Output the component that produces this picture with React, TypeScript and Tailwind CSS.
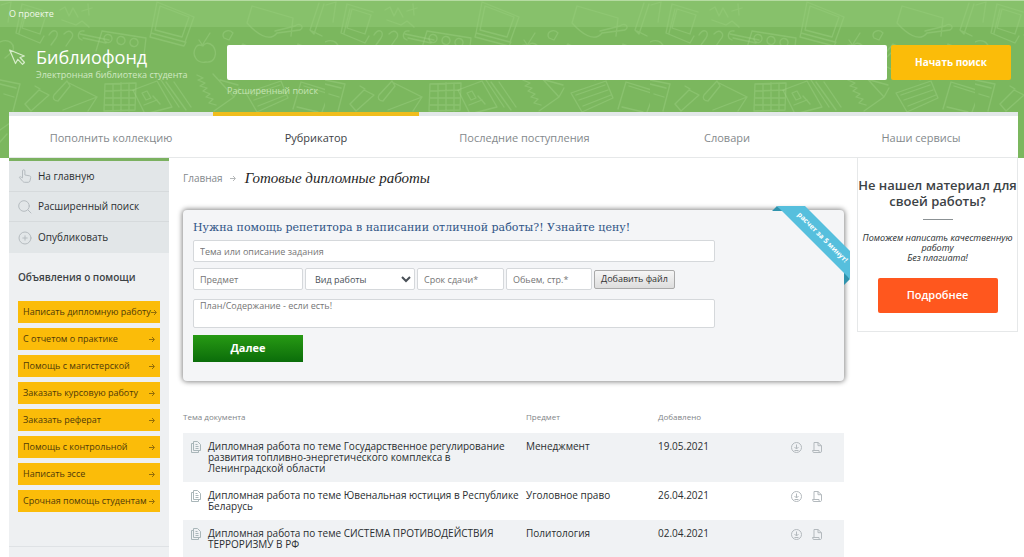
import React from 'react';

const navItems = ['Пополнить коллекцию', 'Рубрикатор', 'Последние поступления', 'Словари', 'Наши сервисы'];

const helpLinks = [
  'Написать дипломную работу',
  'С отчетом о практике',
  'Помощь с магистерской',
  'Заказать курсовую работу',
  'Заказать реферат',
  'Помощь с контрольной',
  'Написать эссе',
  'Срочная помощь студентам',
];

type DocumentRow = {
  title: string;
  subject: string;
  date: string;
};

const documents: DocumentRow[] = [
  {
    title: 'Дипломная работа по теме Государственное регулирование развития топливно-энергетического комплекса в Ленинградской области',
    subject: 'Менеджмент',
    date: '19.05.2021',
  },
  {
    title: 'Дипломная работа по теме Ювенальная юстиция в Республике Беларусь',
    subject: 'Уголовное право',
    date: '26.04.2021',
  },
  {
    title: 'Дипломная работа по теме СИСТЕМА ПРОТИВОДЕЙСТВИЯ ТЕРРОРИЗМУ В РФ',
    subject: 'Политология',
    date: '02.04.2021',
  },
];

// School doodles repeated behind the header
const HeaderPattern: React.FC = () => (
  <svg className="absolute inset-0 h-full w-full" aria-hidden="true">
    <defs>
      <pattern id="doodles" width="325" height="160" patternUnits="userSpaceOnUse">
        <g fill="none" stroke="#a5d58b" strokeWidth="1.300" strokeOpacity="0.36" strokeLinejoin="round" strokeLinecap="round">
          <path d="M22 4 16 33l24 10 4-7M22 4l26 8M19 33l6-24M27 9l19 6-6 19-18-6z" />
          <path d="m60 10 5-3 4 9 4-8 5 9M82 11l10-3M88 4l1 11M62 20l14 5 6-4 7 6" />
          <path d="m157 2 37 15-9 25-34-9zM160 6l29 11-7 20-27-7zM151 33l-1 4 34 9 2-4" />
          <path d="m102 31 44 7-2 17M102 31l-6 20M104 38a4 4 0 1 0 8 1 4 4 0 1 0-8-1M117 40a4 4 0 1 0 8 1 4 4 0 1 0-8-1M130 42a4 4 0 1 0 8 1 4 4 0 1 0-8-1" />
          <path d="M196 47c-5 8 1 17 10 15 9 1 12-9 7-16-5-5-9-2-10 0-2-1-5-2-7 1zM203 46l-4-6M203 44l7-11" />
          <path d="M49 35c5-8 11-3 7 3l-5 7M64 34c6-6 12 0 6 6l-4 6M80 34l29 6M83 38l23 5M84 31c-6-1-8 7-2 9" />
          <path d="m0 80 20 4-7 27M0 84l16 4M4 94l10 3M25 104l14-14 10 5-18 16zM35 86l5 3" />
          <path d="M54 95 67 81l3 5-12 15c-4 0-6-3-4-6zM69 83l28 14-9 14M97 97l-34 13" />
          <path d="m105 84 31-1-1 27-31 1zM105 91l31-1M105 98h30M105 105h30M113 84v27M121 83v28M129 83v28" />
          <path d="m133 90 24-9 15 26-27 7zM142 93l5-2 4 7-5 2zM153 96l7 8M144 105l13-5M161 80l18 27M166 82l20 28M174 82l17 25" />
          <path d="m197 75 6 3-5 2 7 3-5 3 7 2-4 3 7 3-4 3 7 2-4 4 7 2M213 74l21 23-20 14M234 97l5-9M220 80l18 5" />
          <path d="m228 62 15-18 17 8-10 22zM232 62l13-13M224 38c-4-6 5-10 9-5l-4 7z" />
          <path d="m246 93 35-12 7 17-31 14zM251 95l29-10M254 100l29-10M258 106l28-11" />
          <path d="m252 6 41 12-2 18M252 6l-5 17c9 10 22 20 30 10l23-3c5-3 0-8-5-4l-20 5" />
          <path d="m301 82 29 9-8 21M301 82l-8 27M304 86l22 7M297 107l21 5M319 3l-9 27 4 4 10-30M312 31l10 5" />
          <path d="M0 42c9-4 15 2 13 9L5 58M0 130l10-7M318 130l7-8M1 5l10-3-3 20M0 142l7-8" />
          <path d="M262 62l21-8 10 17-23 9zM298 44l16 6-5 15-16-5z" />
        </g>
      </pattern>
    </defs>
    <rect width="100%" height="100%" fill="url(#doodles)" />
  </svg>
);

const CursorIcon: React.FC = () => (
  <svg className="mt-1 h-4 w-4 shrink-0" viewBox="0 0 16 16" fill="none" stroke="#d6ecc9" strokeWidth="1.200" strokeLinejoin="round" aria-hidden="true">
    <path d="m.7 1 14.600 6-4.300 1.500 4.500 5-2 1.800-4.700-5L6.500 14.500z" />
  </svg>
);

const HandIcon: React.FC = () => (
  <svg className="h-[14px] w-[14px] shrink-0" viewBox="0 0 14 14" fill="none" stroke="#b6bcc0" strokeWidth="1" strokeLinejoin="round" strokeLinecap="round" aria-hidden="true">
    <path d="M4.500 8.500V2a1.200 1.200 0 0 1 2.400 0v4l4.600.8c1 .2 1.300.8 1.200 1.700l-.7 3.300c-.2 1-.8 1.500-1.700 1.500H6.500c-.7 0-1.200-.3-1.600-.8L1.300 8.400c.6-.9 1.600-.8 2.200-.1z" />
  </svg>
);

const SearchIcon: React.FC = () => (
  <svg className="h-[14px] w-[14px] shrink-0" viewBox="0 0 14 14" fill="none" stroke="#b6bcc0" strokeLinecap="round" aria-hidden="true">
    <circle cx="6" cy="6" r="5.300" />
    <path d="m10 10 3 3" />
  </svg>
);

const PlusIcon: React.FC = () => (
  <svg className="h-[14px] w-[14px] shrink-0" viewBox="0 0 14 14" fill="none" stroke="#b6bcc0" strokeLinecap="round" aria-hidden="true">
    <circle cx="7" cy="7" r="6" />
    <path d="M7 4.800v4.400M4.800 7h4.400" />
  </svg>
);

const ArrowIcon: React.FC = () => (
  <svg className="h-[7px] w-[6px] shrink-0 opacity-60" viewBox="0 0 6 7" fill="none" stroke="currentColor" strokeWidth="1" aria-hidden="true">
    <path d="M0 3.500h5M3 1l2.500 2.500L3 6" />
  </svg>
);

const CopyIcon: React.FC = () => (
  <svg className="h-3 w-[10px]" viewBox="0 0 10 12" fill="none" stroke="#a9b6b9" strokeWidth="1" aria-hidden="true">
    <path d="M2.500.5h4l3 3v6h-7zM2.500 2.500h-2v9h7v-2M4.500 3.500h2M4.500 5.500h3M4.500 7.500h3" />
  </svg>
);

const DownloadIcon: React.FC = () => (
  <svg className="h-[11px] w-[11px]" viewBox="0 0 11 11" fill="none" stroke="#b3b9bd" strokeWidth="1" aria-hidden="true">
    <circle cx="5.500" cy="5.500" r="5" />
    <path d="M5.500 2.500v4.500M3.500 5l2 2 2-2M3.500 8.500h4" />
  </svg>
);

const PageIcon: React.FC = () => (
  <svg className="h-[11px] w-[10px]" viewBox="0 0 10 11" fill="none" stroke="#b3b9bd" strokeWidth="1" strokeLinejoin="round" aria-hidden="true">
    <path d="M2 8V.5h4l3.500 3.200V9c0 1-.4 1.500-1.200 1.500h-7L.5 8.500H7c0 1.200.4 2 1.300 2M6 .5v3.200h3.500" />
  </svg>
);

const Ribbon: React.FC = () => (
  <div className="absolute -right-[7px] -top-[5px] h-[81px] w-[80px]">
    <svg className="h-full w-full" viewBox="0 0 80 81">
      <path d="M1 6 6 1l6 5zM73 66l6 8-6 6z" fill="#2f93ad" />
      <path d="M6 1h28l45 45v28z" fill="#56bfdd" />
      <text
        x="50"
        y="34"
        transform="rotate(45 50 34)"
        textAnchor="middle"
        fill="#fff"
        className="font-['Open_Sans',sans-serif] text-[7px] font-bold"
      >
        расчет за 5 минут!
      </text>
    </svg>
  </div>
);

const Header: React.FC = () => (
  <header className="relative bg-[#7bb75e]">
    <HeaderPattern />
    <div className="relative flex h-[27px] items-center border-t border-[#b5dba2] bg-[#93cc78]/50 px-[9px] text-[9px] text-[#f0f8ea]">
      <a href="#about">О проекте</a>
    </div>
    <div className="relative flex h-[85px] pl-[9px] pr-[13px] pt-[18px]">
      <a href="#home" className="flex w-[218px] shrink-0 gap-[11px]">
        <CursorIcon />
        <span className="flex flex-col text-white">
          <span className="text-[18px] leading-6">Библиофонд</span>
          <span className="text-[9px] leading-3 text-[#cfe8c1]">Электронная библиотека студента</span>
        </span>
      </a>
      <form className="flex-1">
        <div className="flex gap-1">
          <input type="search" aria-label="Поиск" className="h-[35px] min-w-0 flex-1 rounded-[2px] bg-white px-3 text-xs outline-none" />
          <button type="button" className="h-[35px] w-[120px] rounded-[2px] bg-[#fbbc09] text-[10px] font-bold text-white">
            Начать поиск
          </button>
        </div>
        <a href="#advanced" className="mt-[5px] block text-[9px] leading-3 text-[#c4e3b3]">
          Расширенный поиск
        </a>
      </form>
    </div>
    <nav className="relative ml-[9px] mr-[6px] grid grid-cols-[204fr_206fr_211fr_194fr_194fr] border-b border-[#e6e8e9] bg-white text-center text-[11px]">
      {navItems.map((item) => (
        <a
          key={item}
          href="#nav"
          className={
            item === 'Рубрикатор'
              ? 'border-t-4 border-[#f0bd1c] pb-[9px] pt-3 leading-5 text-[#3c4245]'
              : 'border-t-4 border-[#e3e8e9] pb-[9px] pt-3 leading-5 text-[#84898c]'
          }
        >
          {item}
        </a>
      ))}
    </nav>
  </header>
);

const Sidebar: React.FC = () => (
  <aside className="w-[160px] shrink-0 border-t-[3px] border-[#7bb160] bg-[#eef0f2]">
    <nav className="bg-[#e2e6e8] text-[10px] text-[#2a2e30]">
      <a href="#home" className="flex h-[31px] items-center gap-[6px] border-b border-[#d6dadc] px-[9px]">
        <HandIcon />
        На главную
      </a>
      <a href="#advanced" className="flex h-[30px] items-center gap-[6px] border-b border-[#d6dadc] px-[9px]">
        <SearchIcon />
        Расширенный поиск
      </a>
      <a href="#publish" className="flex h-[31px] items-center gap-[6px] px-[9px]">
        <PlusIcon />
        Опубликовать
      </a>
    </nav>
    <h2 className="mt-4 px-[9px] text-[10px] font-semibold leading-4 text-[#3c4245]">Объявления о помощи</h2>
    <ul className="mt-4 flex flex-col gap-[5px] px-[9px]">
      {helpLinks.map((link) => (
        <li key={link}>
          <a href="#help" className="flex h-[22px] items-center justify-between whitespace-nowrap bg-[#fbbc09] pl-[5px] pr-[5px] text-[9px] text-[#4f3a0a]">
            {link}
            <ArrowIcon />
          </a>
        </li>
      ))}
    </ul>
    <hr className="mt-[34px] border-[#dfe2e5]" />
  </aside>
);

const fieldClass = 'rounded-[2px] border border-[#d5d8db] bg-white text-[9px] text-[#495057] outline-none placeholder:text-[#757575]';

const OrderForm: React.FC = () => (
  <form className="relative mt-[22px] h-[171px] rounded-[4px] bg-[#f4f5f7] px-[10px] pt-2 shadow-[0_0_5px_1px_#8a8a8a]">
    <h2 className="whitespace-nowrap font-['DejaVu_Serif',serif] text-[11px] leading-5 text-[#2f5486]">
      Нужна помощь репетитора в написании отличной работы?! Узнайте цену!
    </h2>
    <div className="mt-[2px] flex w-[522px] max-w-full flex-col">
      <input aria-label="Тема" placeholder="Тема или описание задания" className={`h-[22px] px-[6px] ${fieldClass}`} />
      <div className="mt-[6px] flex items-center gap-[2px]">
        <input aria-label="Предмет" placeholder="Предмет" className={`h-[22px] w-[110px] px-[6px] ${fieldClass}`} />
        <select aria-label="Вид работы" className={`h-[22px] w-[110px] px-[5px] ${fieldClass}`}>
          <option>Вид работы</option>
        </select>
        <input aria-label="Срок сдачи" placeholder="Срок сдачи*" className={`h-[22px] w-[87px] px-[6px] ${fieldClass}`} />
        <input aria-label="Объем" placeholder="Обьем, стр.*" className={`h-[22px] w-[86px] px-[6px] ${fieldClass}`} />
        <button type="button" className="h-[19px] w-[81px] rounded-[2px] border border-[#a9a9a9] bg-linear-to-b from-[#f6f6f6] to-[#dddddd] text-[9px] leading-4 text-[#333]">
          Добавить файл
        </button>
      </div>
      <textarea aria-label="План" placeholder="План/Содержание - если есть!" className={`mt-[9px] h-[29px] resize-none px-[6px] leading-3 ${fieldClass}`} />
    </div>
    <button type="button" className="mt-[7px] h-[27px] w-[110px] bg-linear-to-b from-[#279a14] to-[#0a6d0a] text-[11px] font-bold text-white">
      Далее
    </button>
    <Ribbon />
  </form>
);

const DocumentTable: React.FC = () => (
  <table className="mt-[30px] w-full table-fixed text-left text-[10px] leading-[11px] text-[#2a2e30]">
    <colgroup>
      <col className="w-[25px]" />
      <col />
      <col className="w-[132px]" />
      <col className="w-[125px]" />
      <col className="w-[61px]" />
    </colgroup>
    <thead>
      <tr className="h-[22px] align-top text-[8px] text-[#7f8588]">
        <th colSpan={2} className="font-normal">Тема документа</th>
        <th className="font-normal">Предмет</th>
        <th className="font-normal">Добавлено</th>
        <th aria-label="Действия"></th>
      </tr>
    </thead>
    <tbody>
      {documents.map((doc) => (
        <tr key={doc.date} className="align-top odd:bg-[#f0f2f4]">
          <td className="py-2 pl-2">
            <CopyIcon />
          </td>
          <td className="py-2 pr-1">
            <a href="#document">{doc.title}</a>
          </td>
          <td className="py-2">{doc.subject}</td>
          <td className="py-2">{doc.date}</td>
          <td className="pt-[9px]">
            <div className="flex gap-[10px] pl-2">
              <a href="#download" aria-label="Скачать"><DownloadIcon /></a>
              <a href="#view" aria-label="Открыть"><PageIcon /></a>
            </div>
          </td>
        </tr>
      ))}
    </tbody>
  </table>
);

const PromoCard: React.FC = () => (
  <aside className="flex h-[174px] w-[161px] shrink-0 flex-col items-center border border-t-0 border-[#e6e8e9] text-center">
    <h2 className="mt-[19px] whitespace-nowrap text-[13px] font-semibold leading-4 text-[#3c4245]">
      Не нашел материал для
      <br />
      своей работы?
    </h2>
    <hr className="mt-[10px] w-[30px] border-[#8b9194]" />
    <p className="mt-[13px] whitespace-nowrap text-[9px] italic leading-[10px] text-[#2a2e30]">
      Поможем написать качественную
      <br />
      работу
      <br />
      Без плагиата!
    </p>
    <button type="button" className="mt-[15px] h-[35px] w-[120px] rounded-[2px] bg-[#ff571e] text-[11px] font-semibold text-white">
      Подробнее
    </button>
  </aside>
);

const App: React.FC = () => {
  return (
    <div className="flex min-h-screen flex-col bg-white font-['Open_Sans','Noto_Sans',sans-serif]">
      <Header />
      <div className="flex flex-1 pl-[9px] pr-[6px]">
        <Sidebar />
        <main className="ml-[14px] mr-[13px] min-w-0 flex-1">
          <div className="mt-[10px] flex items-center text-[#84898c]">
            <a href="#home" className="mr-[7px] text-[10px] leading-5">Главная</a>
            <ArrowIcon />
            <h1 className="ml-[9px] font-['Liberation_Serif',serif] text-[15px] italic leading-5 text-[#1f1f1f]">Готовые дипломные работы</h1>
          </div>
          <OrderForm />
          <DocumentTable />
        </main>
        <PromoCard />
      </div>
    </div>
  );
};

export default App;
